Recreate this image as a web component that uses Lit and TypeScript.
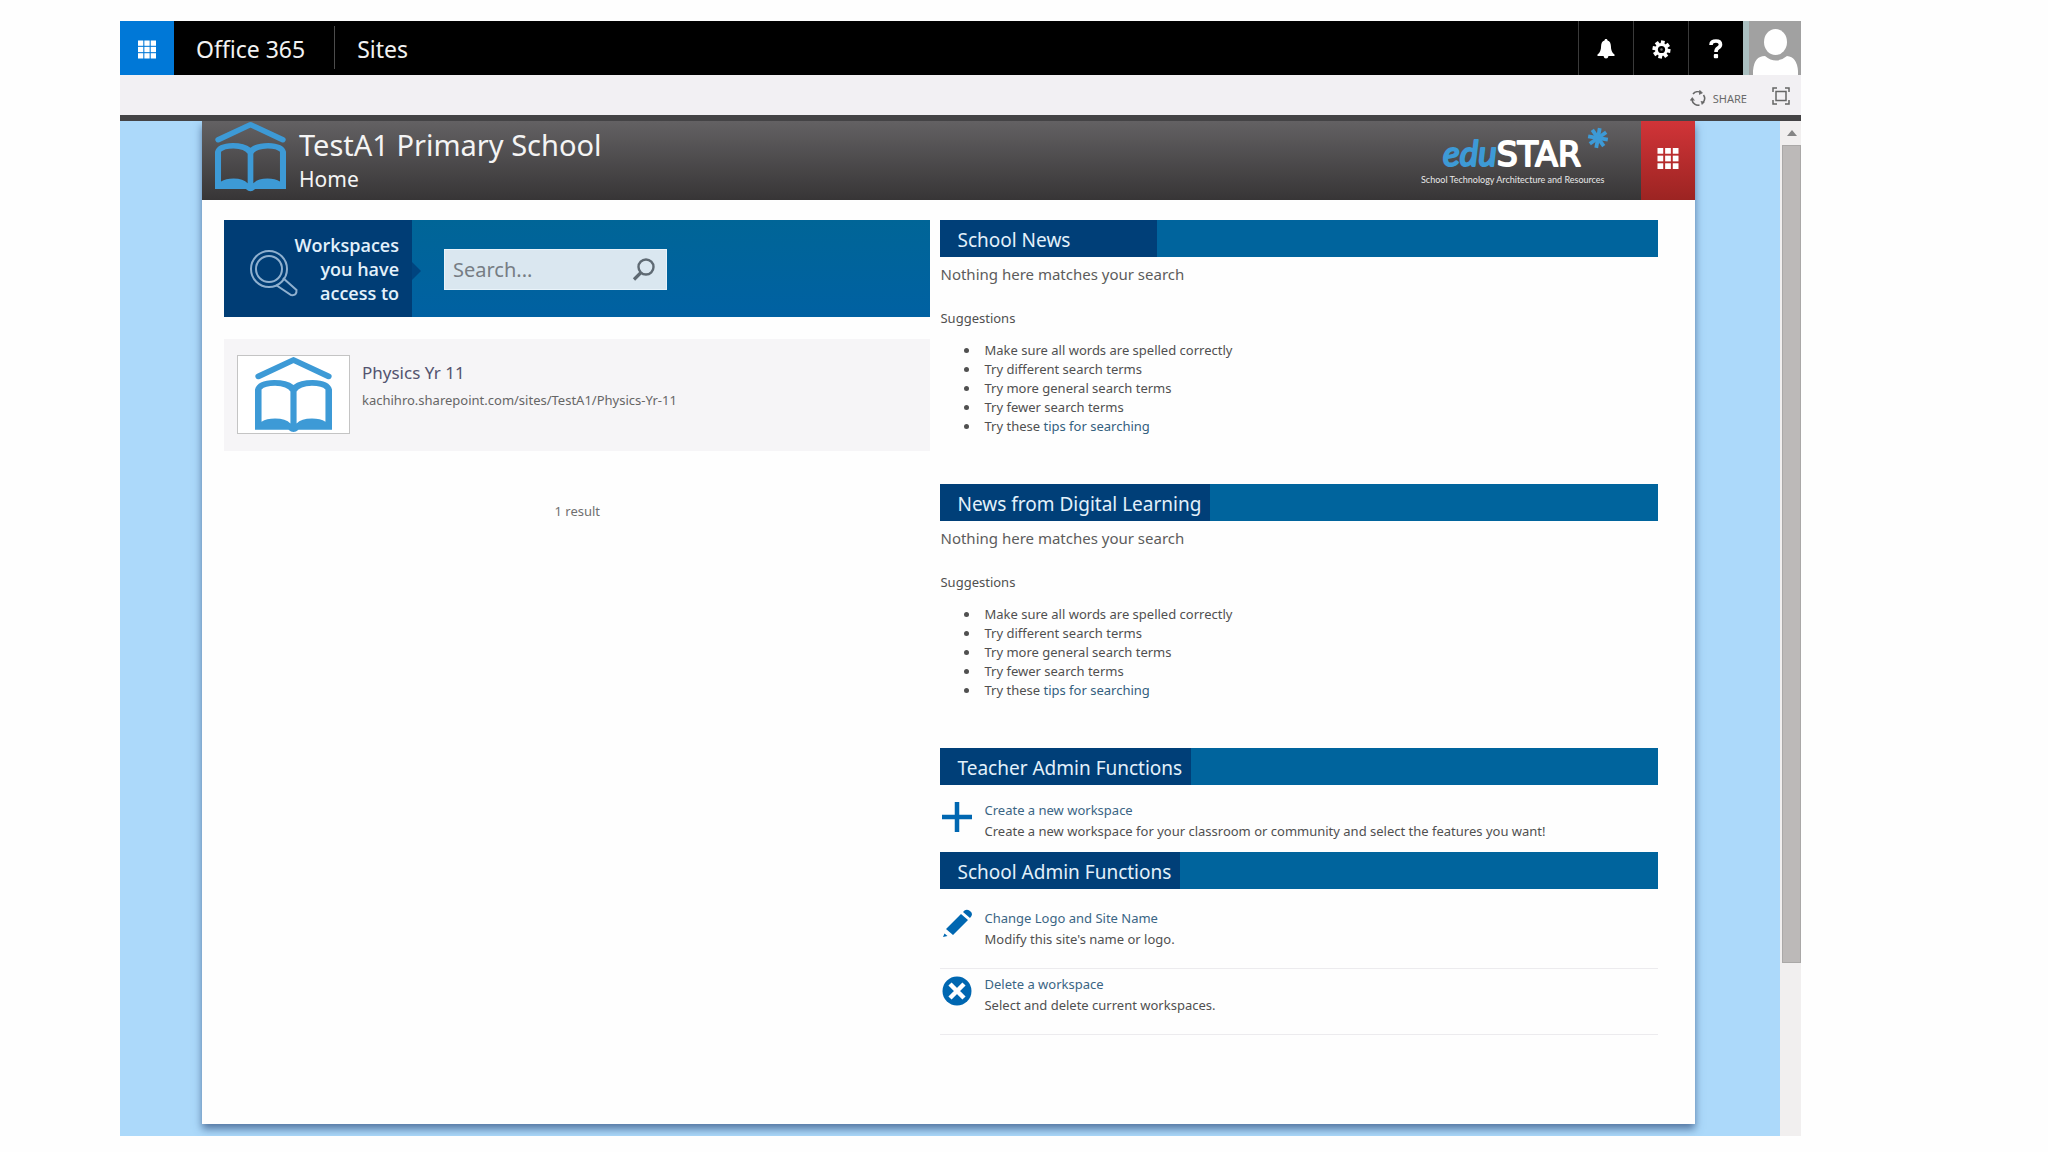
import { LitElement, html, css, svg } from "lit";
import { customElement, property } from "lit/decorators.js";

const grid = (gap: number, size: number) => svg`${[0, 1, 2].map((r) =>
  [0, 1, 2].map((c) => svg`<rect x=${c * (size + gap)} y=${r * (size + gap)} width=${size} height=${size} fill="#fff"></rect>`)
)}`;

@customElement("school-mark")
class SchoolMark extends LitElement {
  static styles = css`
    :host { display: block; }
    svg { display: block; width: 100%; height: 100%; }
  `;
  render() {
    return html`<svg viewBox="0 0 200 212" preserveAspectRatio="none" fill="#3d9ad6" aria-hidden="true">
      <path d="M9 56 L100 11 L191 56" fill="none" stroke="#3d9ad6" stroke-width="16" stroke-linecap="round" stroke-linejoin="round"></path>
      <path fill-rule="evenodd" d="M0 92 Q6 67 50 66 Q84 66 100 80 Q116 66 150 66 Q194 67 200 92 V203 H113 Q100 216 87 203 H0Z
        M17 92 Q26 82 52 82 Q84 83 92 98 V186 Q80 172 52 172 Q30 172 17 181Z
        M183 92 Q174 82 148 82 Q116 83 108 98 V186 Q120 172 148 172 Q170 172 183 181Z"></path>
    </svg>`;
  }
}

@customElement("section-heading")
class SectionHeading extends LitElement {
  @property() text = "";
  static styles = css`
    :host { display: block; background: #00649d; }
    .label {
      display: inline-block; vertical-align: top; box-sizing: border-box; min-width: 217px; margin: 0;
      padding: 3px 9px 0 17px; background: #003f78; color: #e3f1fb;
      font-size: 19px; font-weight: 400; line-height: 34px;
    }
  `;
  render() {
    return html`<h2 class="label">${this.text}</h2>`;
  }
}

@customElement("no-results")
class NoResults extends LitElement {
  static styles = css`
    :host { display: block; height: 227px; color: #505050; font-size: 13px; }
    .lead { margin: 0; padding-top: 5px; font-size: 15px; line-height: 24px; color: #5c5c5c; }
    .sub { margin: 23px 0 13px; line-height: 19px; }
    .tips { margin: 0; padding-left: 40px; line-height: 19px; }
    .tips li { padding-left: 4px; }
    .link { color: #34607f; text-decoration: none; }
  `;
  render() {
    return html`
      <p class="lead">Nothing here matches your search</p>
      <p class="sub">Suggestions</p>
      <ul class="tips">
        <li>Make sure all words are spelled correctly</li>
        <li>Try different search terms</li>
        <li>Try more general search terms</li>
        <li>Try fewer search terms</li>
        <li>Try these <a class="link" href="#tips">tips for searching</a></li>
      </ul>`;
  }
}

@customElement("app-root")
class AppRoot extends LitElement {
  static styles = css`
    :host {
      display: flex; flex-direction: column; box-sizing: border-box; min-height: 100vh;
      padding: 21px 247px 16px 120px; background: #fefefe; color: #505050;
      font-family: "Noto Sans", "Open Sans", sans-serif; font-size: 13px; line-height: 21px;
    }
    button { margin: 0; padding: 0; border: 0; background: none; color: inherit; font: inherit; }
    svg { display: block; }
    a { text-decoration: none; }

    .suite { display: flex; height: 54px; background: #000; color: #f2f2f2; font-size: 23px; }
    .launcher { display: grid; place-items: center; width: 54px; height: 56px; background: #0078d7; }
    .brand { display: flex; align-items: center; padding: 2px 29px 0 22px; color: inherit; }
    .divider { width: 1px; margin: 5px 0 6px; background: #4c4c4c; }
    .area { display: flex; align-items: center; padding: 2px 0 0 22px; color: inherit; }
    .tools { display: flex; margin-left: auto; }
    .tool { display: grid; place-items: center; width: 55px; padding-top: 2px; border-left: 1px solid #3a3a3a; }
    .avatar { width: 58px; height: 56px; border-left: 6px solid #aabfc0; background: #a1a1a1; }

    .ribbon {
      display: flex; justify-content: flex-end; align-items: center; gap: 25px; height: 38px;
      padding: 2px 11px 0 0; background: #f2f0f3; border-bottom: 6px solid #444345;
    }
    .share { display: flex; align-items: center; gap: 7px; padding-top: 4px; color: #6a6a6a; font-size: 11px; }

    .body { display: flex; flex: 1; background: #acd9fa; }
    .stage { flex: 1; padding: 0 85px 12px 82px; display: flex; overflow: hidden; }
    .page { flex: 1; background: #fefefe; box-shadow: 0 5px 8px #3f5f8ccc; }
    .scroll { width: 21px; display: flex; flex-direction: column; align-items: flex-end; background: #f1efef; }
    .up { display: grid; place-items: center; width: 19px; height: 24px; }
    .thumb { width: 19px; flex: 0 1 818px; background: #bcb9b8; box-shadow: inset 0 0 0 1px #aaa8a7; }

    .head { display: flex; height: 79px; background: linear-gradient(#636163, #373536); color: #f4f4f4; }
    .mark { width: 71px; height: 71px; margin-left: 13px; }
    .titles { padding-left: 13px; }
    .school { margin: 0; font-size: 29px; font-weight: 400; line-height: 48px; }
    .home { margin: 0; font-size: 21px; line-height: 20px; }
    .edustar { margin-left: auto; width: 204px; height: 79px; }
    .apps { display: grid; place-items: center; width: 54px; margin-left: 20px; padding-bottom: 4px; background: linear-gradient(#d13438, #9c2422); }

    .columns { display: grid; grid-template-columns: 706fr 717fr; gap: 10px; padding: 20px 37px 0 22px; }
    .finder { display: flex; height: 97px; background: linear-gradient(#006597, #0061a2); }
    .scope {
      position: relative; display: flex; align-items: center; justify-content: flex-end; box-sizing: border-box;
      width: 188px; padding-right: 13px; background: #003d75; color: #e3f1fb;
    }
    .scope::after {
      content: ""; position: absolute; left: 100%; top: 42px;
      border: 9px solid transparent; border-right: 0; border-left-color: #00447f;
    }
    .lens { margin: 10px -10px 0 0; }
    .scopetext { width: 110px; text-align: right; font-family: "Open Sans", sans-serif; font-size: 18px; font-weight: 600; line-height: 24px; }
    .box {
      display: flex; align-items: center; align-self: center; box-sizing: border-box; width: 223px; height: 41px;
      margin: 2px 0 0 32px; padding: 0 10px 0 8px; background: #dae7f0; border: 1px solid #e9f3fa;
    }
    .query { flex: 1; min-width: 0; padding: 0; border: 0; outline: 0; background: none; color: #555; font: inherit; font-size: 20px; }
    .query::placeholder { color: #767d84; opacity: 1; }
    .result { display: flex; gap: 12px; box-sizing: border-box; height: 112px; margin-top: 22px; padding: 16px 13px; background: #f6f5f7; }
    .frame { display: grid; place-items: center; width: 111px; height: 77px; border: 1px solid #c4c4c4; background: #fff; }
    .thumbmark { width: 77px; height: 77px; }
    .name { display: block; padding-top: 4px; font-size: 17px; line-height: 28px; color: #53536f; }
    .url { margin: 0; line-height: 26px; color: #666; }
    .count { margin: 50px 0 0; text-align: center; color: #707070; }

    .task { display: flex; gap: 12px; box-sizing: border-box; }
    .task.first { height: 67px; padding-top: 15px; }
    .task.edit { height: 80px; padding-top: 19px; border-bottom: 1px solid #ecebee; }
    .task.remove { height: 66px; padding-top: 5px; border-bottom: 1px solid #ecebee; }
    .task svg { flex: none; margin-top: 1px; }
    .task a { color: #3a6584; }
    .task p { margin: 0; }
  `;

  render() {
    return html`
      <header class="suite">
        <button class="launcher" aria-label="App launcher"><svg width="18" height="19" viewBox="0 0 17 17">${grid(1, 5)}</svg></button>
        <a class="brand" href="#office">Office 365</a>
        <span class="divider"></span>
        <a class="area" href="#sites">Sites</a>
        <div class="tools">
          <button class="tool" aria-label="Notifications">
            <svg width="18" height="20" viewBox="0 0 18 20" fill="#fff"><path d="M9 0C10 0 10.5 .7 10.5 1.5C13 2.3 13.8 4.5 13.9 7C14 11 14.8 13.5 17.5 15.5V17H11.5Q11 19.5 9 19.5Q7 19.5 6.500 17H.5V15.500C3.200 13.500 4 11 4.100 7C4.200 4.500 5 2.300 7.500 1.500C7.500 .7 8 0 9 0Z"></path></svg>
          </button>
          <button class="tool" aria-label="Settings">
            <svg width="19" height="19" viewBox="-10 -10 20 20">
              ${[0, 45, 90, 135].map((a) => svg`<rect x="-2" y="-9.500" width="4" height="19" fill="#fff" transform="rotate(${a + 10})"></rect>`)}
              <circle r="6.800" fill="#fff"></circle><circle r="3.800" fill="#000"></circle><circle r="1.300" fill="#777"></circle>
            </svg>
          </button>
          <button class="tool" aria-label="Help">
            <svg width="16" height="20" viewBox="0 0 16 20"><path d="M3 6Q3 2 8 2Q12.500 2 12.500 5.500Q12.500 7.500 10 9Q8 10.300 8 13" fill="none" stroke="#fff" stroke-width="3.600"></path><rect x="5.800" y="15" width="4.300" height="4.300" rx="1" fill="#fff"></rect></svg>
          </button>
          <button class="avatar" aria-label="Account">
            <svg width="52" height="56" viewBox="0 0 52 56" fill="#fff"><path d="M4 56V50Q5 35 16 35Q27 44 38 35Q48 36 49 50V56Z"></path><ellipse cx="26.500" cy="21" rx="11.500" ry="13"></ellipse></svg>
          </button>
        </div>
      </header>

      <div class="ribbon">
        <button class="share">
          <svg width="16" height="17" viewBox="0 0 16 17" fill="none" stroke="#666" stroke-width="1.500"><path d="M3 4A6.300 6.300 0 0 1 11 2.500M13.500 5A6.300 6.300 0 0 1 12.500 13M9.500 15A6.300 6.300 0 0 1 2 10"></path><path d="M9.500 0L12.500 3L9 4.500M14.500 12L12 14.500L11 11M0 10.500L2.300 7.500L4.500 10.500" fill="#666" stroke-width=".6"></path></svg>
          SHARE
        </button>
        <button aria-label="Focus on content">
          <svg width="18" height="18" viewBox="0 0 18 18" fill="none" stroke="#666" stroke-width="1.500"><path d="M1 5V1H5M13 1H17V5M17 13V17H13M5 17H1V13"></path><rect x="4" y="4.500" width="10" height="9"></rect></svg>
        </button>
      </div>

      <div class="body">
        <div class="stage">
          <main class="page">
            <div class="head">
              <school-mark class="mark"></school-mark>
              <div class="titles">
                <h1 class="school">TestA1 Primary School</h1>
                <p class="home">Home</p>
              </div>
              <svg class="edustar" viewBox="0 0 204 79" role="img" aria-label="eduSTAR">
                <text x="26" y="45" stroke-linejoin="round"><tspan font-family="Lato, sans-serif" font-size="35" fill="#3d9ad6" stroke="#3d9ad6" stroke-width="2" font-style="italic">edu</tspan><tspan font-family="DejaVu Sans, sans-serif" font-size="33" fill="#fff" stroke="#fff" stroke-width="2">STAR</tspan></text>
                <text x="4" y="62" fill="#e8e8e8" font-family="Lato, sans-serif" font-size="9">School Technology Architecture and Resources</text>
                <g stroke="#3d9ad6" stroke-width="3.800" transform="translate(181 17)">
                  ${[0, 45, 90, 135].map((a) => svg`<path d="M0 -10V10" transform="rotate(${a + 10})"></path>`)}
                </g>
              </svg>
              <button class="apps" aria-label="Apps"><svg width="22" height="21" viewBox="0 0 22 22">${grid(2, 6)}</svg></button>
            </div>

            <div class="columns">
              <section>
                <div class="finder">
                  <div class="scope">
                    <svg class="lens" width="50" height="47" viewBox="0 0 50 47" fill="none" stroke="#8fb0cf" stroke-width="2"><circle cx="20" cy="19" r="18"></circle><circle cx="20" cy="19" r="13"></circle><path d="M27 35L42 45Q48 46 47.500 40L34 28"></path></svg>
                    <label class="scopetext" for="query">Workspaces you have access to</label>
                  </div>
                  <div class="box">
                    <input class="query" id="query" type="text" placeholder="Search..." />
                    <button aria-label="Search"><svg width="24" height="24" viewBox="0 0 24 24" fill="none" stroke="#5f6a73"><circle cx="14" cy="9" r="7.500" stroke-width="2.400"></circle><path d="M9 14.500L2 21.500" stroke-width="3.200"></path></svg></button>
                  </div>
                </div>
                <article class="result">
                  <div class="frame"><school-mark class="thumbmark"></school-mark></div>
                  <div>
                    <a class="name" href="#physics">Physics Yr 11</a>
                    <p class="url">kachihro.sharepoint.com/sites/TestA1/Physics-Yr-11</p>
                  </div>
                </article>
                <p class="count">1 result</p>
              </section>

              <section>
                <section-heading text="School News"></section-heading>
                <no-results></no-results>
                <section-heading text="News from Digital Learning"></section-heading>
                <no-results></no-results>
                <section-heading text="Teacher Admin Functions"></section-heading>
                <div class="task first">
                  <svg width="32" height="32" viewBox="0 0 32 32"><path d="M17 1V31M2 16H32" stroke="#0067b1" stroke-width="4.500"></path></svg>
                  <div><a href="#create">Create a new workspace</a>
                  <p>Create a new workspace for your classroom or community and select the features you want!</p></div>
                </div>
                <section-heading text="School Admin Functions"></section-heading>
                <div class="task edit">
                  <svg width="32" height="32" viewBox="0 0 32 32" fill="#0067b1"><path d="M6 20L21 5L28 11L13 26ZM23 3Q26 -1 30 2Q34 5 30 9ZM3 28L4.500 24.500L7.500 27Z"></path></svg>
                  <div><a href="#change">Change Logo and Site Name</a>
                  <p>Modify this site's name or logo.</p></div>
                </div>
                <div class="task remove">
                  <svg width="32" height="32" viewBox="0 0 32 32"><circle cx="17" cy="16" r="14.500" fill="#0067b1"></circle><path d="M10 9L24 23M24 9L10 23" stroke="#fff" stroke-width="4.500"></path></svg>
                  <div><a href="#delete">Delete a workspace</a>
                  <p>Select and delete current workspaces.</p></div>
                </div>
              </section>
            </div>
          </main>
        </div>
        <div class="scroll" aria-hidden="true">
          <div class="up"><svg width="10" height="6" viewBox="0 0 10 6"><path d="M0 6L5 0L10 6Z" fill="#858585"></path></svg></div>
          <div class="thumb"></div>
        </div>
      </div>`;
  }
}
